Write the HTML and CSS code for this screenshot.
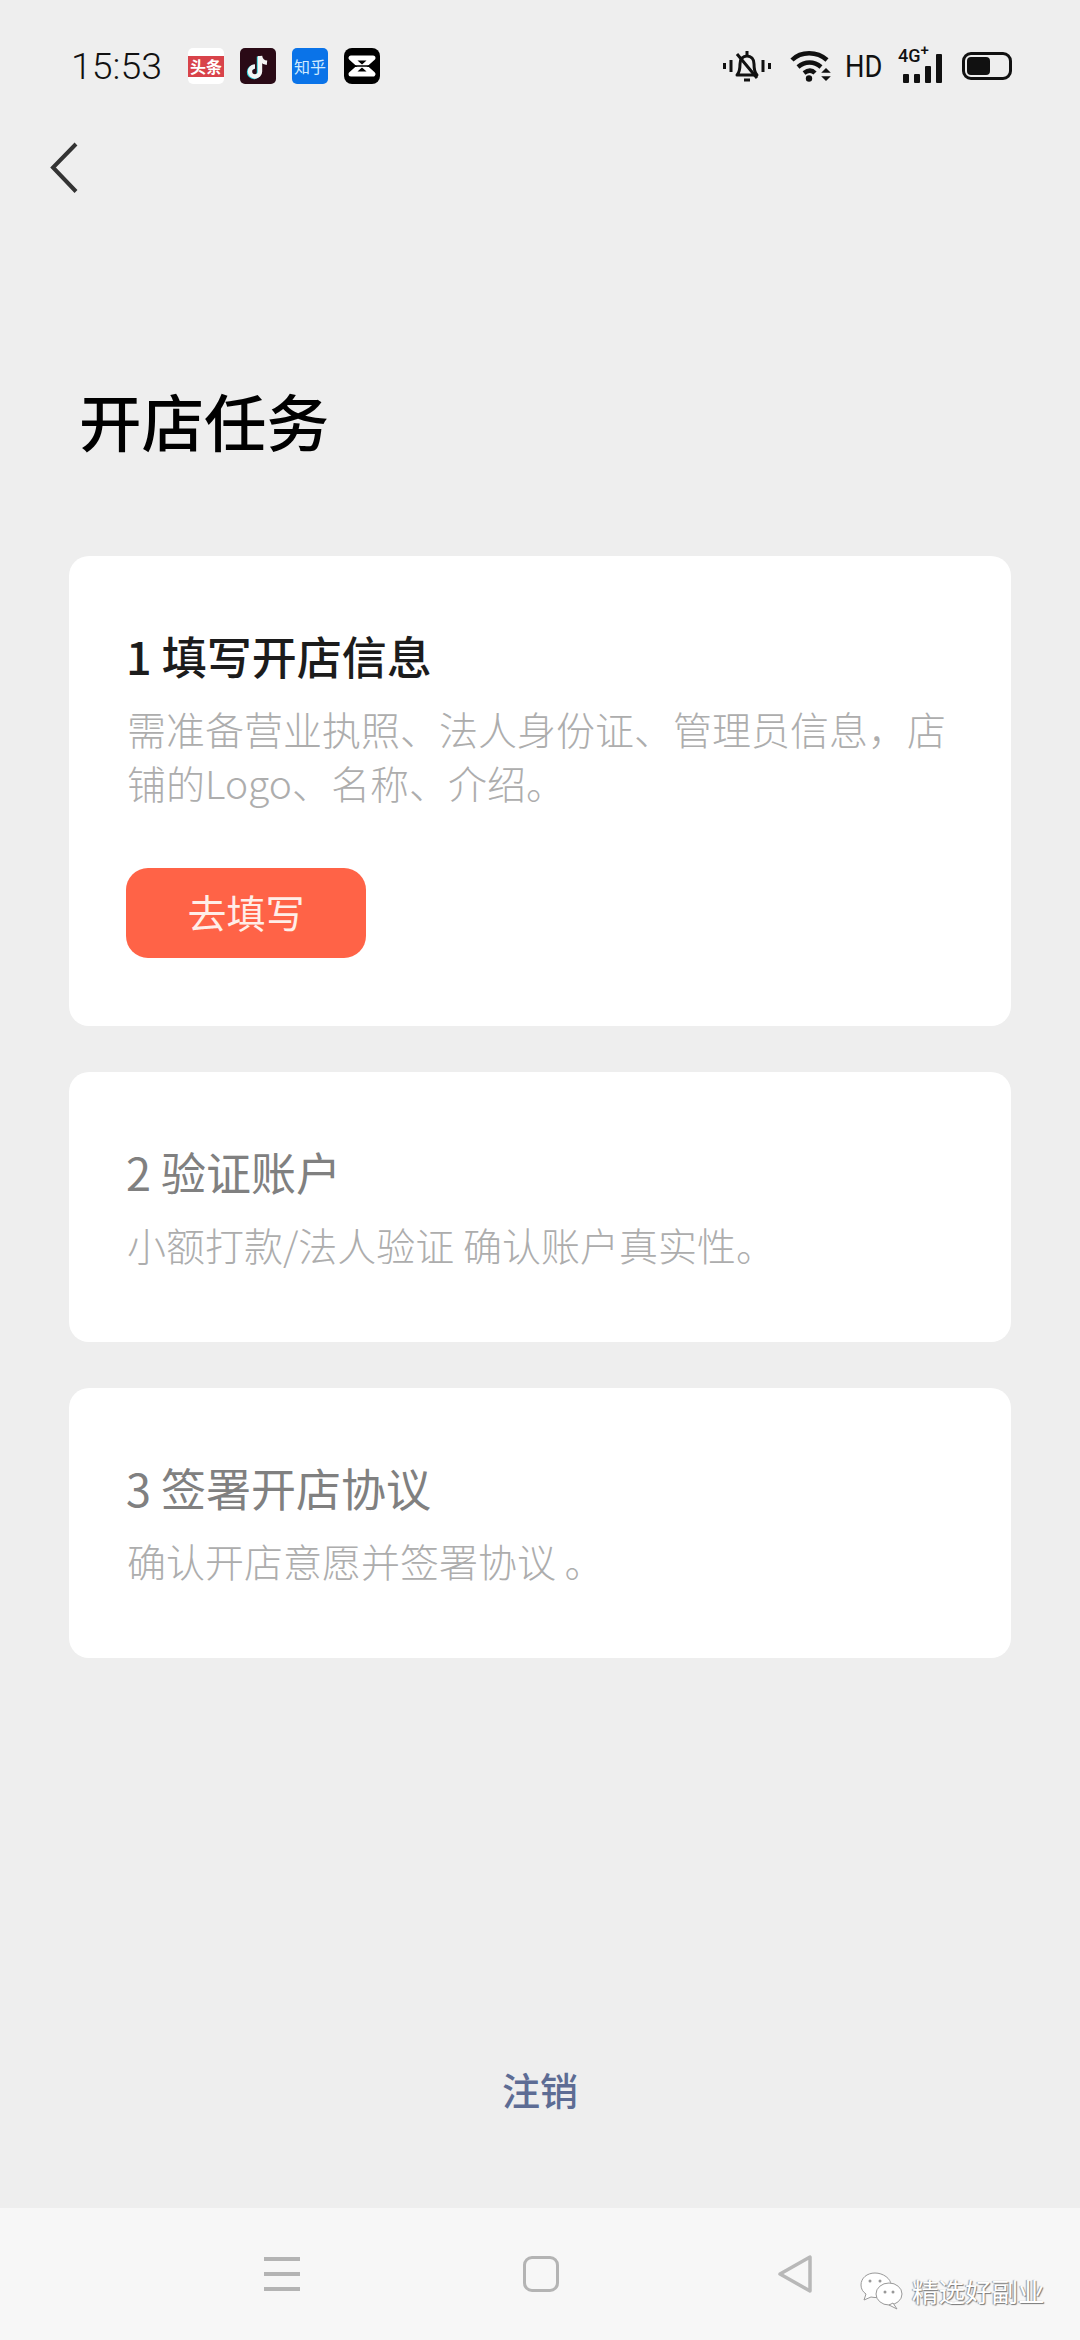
FILE: index.html
```html
<!DOCTYPE html>
<html lang="zh-CN">
<head>
  <meta charset="UTF-8" />
  <meta name="viewport" content="width=device-width, initial-scale=1.0"/>
  <title>开店任务</title>
  <link rel="stylesheet" href="styles.css">
</head>
<body>
  <div class="page">
    <div class="status-bar">
      <span class="time">15:53</span>
      <div class="app-icons">
        <span class="app app-toutiao"><span class="toutiao-label">头条</span></span>
        <span class="app app-tiktok">
          <svg viewBox="0 0 36 36" width="36" height="36">
            <path d="M20 8v15.500a5 5 0 1 1-5-5" fill="none" stroke="#35d6e0" stroke-width="4.400" transform="translate(-1 0.500)"/>
            <path d="M20 8v15.500a5 5 0 1 1-5-5M20 8c.6 4 3.200 6.400 7 6.800" fill="none" stroke="#f4f4f4" stroke-width="4.400"/>
          </svg>
        </span>
        <span class="app app-zhihu">知乎</span>
        <span class="app app-capcut">
          <svg viewBox="0 0 36 36" width="36" height="36">
            <path d="M7 10l22 0-9 8 9 8-22 0 9-8z" fill="none" stroke="#fff" stroke-width="5" stroke-linejoin="round"/>
            <path d="M5 18h26" stroke="#000" stroke-width="1.500"/>
          </svg>
        </span>
      </div>
      <div class="sys-icons">
        <svg class="ic-bell" viewBox="0 0 48 34" width="48" height="34">
          <path d="M1.500 14v6M8 11v12M40 11v12M46.500 14v6" stroke="#111" stroke-width="3" fill="none"/>
          <path d="M14 26c3-3 3-7 3-11 0-5 3-8 7-8s7 3 7 8c0 4 0 8 3 11z" fill="none" stroke="#111" stroke-width="3" stroke-linejoin="round"/>
          <path d="M24 2v4M21 31h6M14 5l20 24" stroke="#111" stroke-width="3" fill="none"/>
        </svg>
        <svg class="ic-wifi" viewBox="0 0 42 32" width="42" height="32">
          <path d="M2 10C11 1 27 1 37 10" fill="none" stroke="#111" stroke-width="4.500"/>
          <path d="M8 17c7-6 16-6 23 0" fill="none" stroke="#111" stroke-width="4.500"/>
          <path d="M14 23c4-3 8-3 11 0" fill="none" stroke="#111" stroke-width="4.500"/>
          <circle cx="19" cy="28.500" r="3.200" fill="#111"/>
          <path d="M33 22l3-3 3 3zM33 27l3 3 3-3z" fill="#111" stroke="#111" stroke-width="1.500"/>
        </svg>
        <span class="hd">HD</span>
        <span class="signal">
          <span class="net">4G<sup>+</sup></span>
          <span class="bars">
            <i class="bar bar-1"></i>
            <i class="bar bar-2"></i>
            <i class="bar bar-3"></i>
            <i class="bar bar-4"></i>
          </span>
        </span>
        <span class="battery"><i class="battery-level"></i></span>
      </div>
    </div>

    <div class="nav">
      <svg viewBox="0 0 30 52" width="30" height="52">
        <path d="M26 2L3 25.500l23 24" fill="none" stroke="#333" stroke-width="4"/>
      </svg>
    </div>

    <h1 class="title">开店任务</h1>

    <div class="tasks">
      <div class="card card-first">
        <h3 class="card-title">1 填写开店信息</h3>
        <p class="card-desc">需准备营业执照、法人身份证、管理员信息，店铺的Logo、名称、介绍。</p>
        <button class="btn">去填写</button>
      </div>
      <div class="card">
        <h3 class="card-title muted">2 验证账户</h3>
        <p class="card-desc">小额打款/法人验证 确认账户真实性。</p>
      </div>
      <div class="card">
        <h3 class="card-title muted">3 签署开店协议</h3>
        <p class="card-desc">确认开店意愿并签署协议 。</p>
      </div>
    </div>

    <a class="logout">注销</a>

    <div class="bottom-bar">
      <span class="menu-icon"><i></i><i></i><i></i></span>
      <span class="home-icon"></span>
      <svg class="back-icon" viewBox="0 0 36 40" width="36" height="40">
        <path d="M33 3v34L3 20z" fill="none" stroke="#b8b8b8" stroke-width="3.500" stroke-linejoin="round"/>
      </svg>
    </div>

    <div class="watermark">
      <svg viewBox="0 0 44 38" width="44" height="38">
        <path d="M15 1C7 1 1 6 1 13c0 4 2 7 5 9l-2 6 7-3c2 .5 4 .5 6 .5 8 0 14-6 14-12.500S23 1 15 1z" fill="#fff" stroke="#999" stroke-width="1"/>
        <ellipse cx="29" cy="22" rx="13" ry="11" fill="#fff" stroke="#999" stroke-width="1"/>
        <path d="M33 31l4 6-8-4z" fill="#fff" stroke="#999" stroke-width="1"/>
        <circle cx="10" cy="9" r="1.500" fill="#999"/>
        <circle cx="20" cy="9" r="1.500" fill="#999"/>
        <circle cx="25" cy="20" r="1.500" fill="#999"/>
        <circle cx="33" cy="20" r="1.500" fill="#999"/>
      </svg>
      <span class="watermark-text">精选好副业</span>
    </div>
  </div>
</body>
</html>
```

FILE: styles.css
```css
* {
  box-sizing: border-box;
}

body {
  margin: 0;
  background: #eeeeee;
  font-family: "Noto Sans CJK SC", "Noto Sans", sans-serif;
}

.page {
  position: relative;
  width: 1080px;
  height: 2340px;
  display: flex;
  flex-direction: column;
  overflow: hidden;
}

.status-bar {
  height: 132px;
  padding: 0 68px 0 71px;
  display: flex;
  align-items: center;
}

.time {
  font-family: Roboto, sans-serif;
  font-weight: 300;
  font-size: 37.500px;
  color: #111;
  width: 117px;
}

.app-icons {
  display: flex;
  gap: 16px;
}

.app {
  width: 36px;
  height: 36px;
  border-radius: 5px;
  display: flex;
  align-items: center;
  justify-content: center;
  overflow: hidden;
}

.app-toutiao {
  background: #fff;
}

.toutiao-label {
  width: 36px;
  background: #d8434a;
  color: #fff;
  font-size: 16px;
  font-weight: 700;
  line-height: 21px;
  text-align: center;
}

.app-tiktok {
  background: #2a0a16;
}

.app-zhihu {
  background: #0a73e8;
  color: #cfeaff;
  font-size: 16px;
}

.app-capcut {
  background: #000;
  border-radius: 8px;
}

.sys-icons {
  margin-left: auto;
  display: flex;
  align-items: center;
}

.ic-wifi {
  margin-left: 19px;
}

.hd {
  margin-left: 13px;
  font-family: Roboto, sans-serif;
  font-size: 31px;
  color: #111;
  transform: scaleX(0.88);
  transform-origin: left center;
  width: 40px;
}

.signal {
  margin-left: 13px;
  position: relative;
  width: 44px;
  height: 34px;
}

.net {
  position: absolute;
  left: 0;
  top: -3px;
  font-family: Roboto, sans-serif;
  font-weight: 500;
  font-size: 18px;
  line-height: 20px;
  color: #111;
}

.net sup {
  font-size: 15px;
  line-height: 0;
}

.bars {
  position: absolute;
  right: 0;
  bottom: 0;
  display: flex;
  align-items: flex-end;
  gap: 5px;
}

.bar {
  display: block;
  width: 6px;
  background: #111;
  border-radius: 1px;
}

.bar-1 { height: 9px; }
.bar-2 { height: 9px; }
.bar-3 { height: 17px; }
.bar-4 { height: 29px; }

.battery {
  margin-left: 20px;
  width: 50px;
  height: 28px;
  border: 3px solid #111;
  border-radius: 9px;
  padding: 2px;
}

.battery-level {
  display: block;
  width: 23px;
  height: 18px;
  background: #111;
  border-radius: 4px;
}

.nav {
  padding: 10px 0 0 50px;
  height: 120px;
}

.title {
  margin: 0 0 0 79px;
  height: 304px;
  padding-top: 125px;
  font-size: 62.500px;
  line-height: 86px;
  font-weight: 500;
  color: #000;
}

.tasks {
  margin: 0 69px;
  display: flex;
  flex-direction: column;
  gap: 46px;
}

.card {
  background: #fff;
  border-radius: 20px;
  padding: 68px 58px 0;
  height: 270px;
}

.card-first {
  height: 470px;
}

.card-title {
  margin: 0 0 13px -1px;
  font-size: 45px;
  line-height: 64px;
  font-weight: 500;
  color: #1c1c1c;
}

.muted {
  font-weight: 400;
  color: #808080;
}

.card-desc {
  margin: 0;
  font-size: 39px;
  line-height: 54px;
  font-weight: 300;
  color: #adadad;
}

.btn {
  display: block;
  margin: 59px 0 0 -1px;
  width: 240px;
  height: 90px;
  padding: 0 0 5px;
  border: none;
  border-radius: 22px;
  background: #ff6347;
  color: #ffeee8;
  font-family: inherit;
  font-size: 39px;
}

.logout {
  margin-top: 403px;
  text-align: center;
  font-size: 38px;
  line-height: 56px;
  font-weight: 500;
  color: #5d6c94;
}

.bottom-bar {
  margin-top: auto;
  height: 132px;
  background: #f7f7f7;
  position: relative;
  display: flex;
  align-items: center;
  padding-left: 264px;
}

.menu-icon {
  width: 36px;
  display: flex;
  flex-direction: column;
  gap: 11px;
}

.menu-icon i {
  display: block;
  height: 4px;
  background: #b4b4b4;
}

.home-icon {
  margin-left: 223px;
  width: 36px;
  height: 36px;
  border: 3px solid #b4b4b4;
  border-radius: 9px;
}

.back-icon {
  margin-left: 218px;
}

.watermark {
  position: absolute;
  left: 860px;
  bottom: 30px;
  display: flex;
  align-items: center;
  gap: 8px;
}

.watermark-text {
  font-size: 26.500px;
  color: #fff;
  text-shadow: 1px 1px 1px #777, -1px 0 1px #999;
}
```
